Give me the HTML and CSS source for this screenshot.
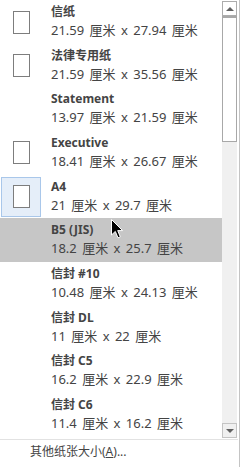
FILE: index.html
```html
<!DOCTYPE html>
<html lang="zh-CN">
<head>
    <meta charset="UTF-8">
    <title>纸张大小</title>
    <link rel="stylesheet" href="styles.css">
</head>
<body>
    <div class="menu">
        <div class="main">
            <!-- Paper size list -->
            <div class="list">
                <div class="item">
                    <div class="thumb"><span class="paper"></span></div>
                    <div class="text">
                        <div class="title">信纸</div>
                        <div class="size">21.59 厘米 x 27.94 厘米</div>
                    </div>
                </div>
                <div class="item">
                    <div class="thumb"><span class="paper"></span></div>
                    <div class="text">
                        <div class="title">法律专用纸</div>
                        <div class="size">21.59 厘米 x 35.56 厘米</div>
                    </div>
                </div>
                <div class="item">
                    <div class="thumb"></div>
                    <div class="text">
                        <div class="title">Statement</div>
                        <div class="size">13.97 厘米 x 21.59 厘米</div>
                    </div>
                </div>
                <div class="item">
                    <div class="thumb"><span class="paper"></span></div>
                    <div class="text">
                        <div class="title">Executive</div>
                        <div class="size">18.41 厘米 x 26.67 厘米</div>
                    </div>
                </div>
                <div class="item">
                    <div class="thumb selected"><span class="paper"></span></div>
                    <div class="text">
                        <div class="title">A4</div>
                        <div class="size">21 厘米 x 29.7 厘米</div>
                    </div>
                </div>
                <div class="item hover">
                    <div class="thumb"></div>
                    <div class="text">
                        <div class="title">B5 (JIS)</div>
                        <div class="size">18.2 厘米 x 25.7 厘米</div>
                    </div>
                </div>
                <div class="item">
                    <div class="thumb"></div>
                    <div class="text">
                        <div class="title">信封 #10</div>
                        <div class="size">10.48 厘米 x 24.13 厘米</div>
                    </div>
                </div>
                <div class="item">
                    <div class="thumb"></div>
                    <div class="text">
                        <div class="title">信封 DL</div>
                        <div class="size">11 厘米 x 22 厘米</div>
                    </div>
                </div>
                <div class="item">
                    <div class="thumb"></div>
                    <div class="text">
                        <div class="title">信封 C5</div>
                        <div class="size">16.2 厘米 x 22.9 厘米</div>
                    </div>
                </div>
                <div class="item">
                    <div class="thumb"></div>
                    <div class="text">
                        <div class="title">信封 C6</div>
                        <div class="size">11.4 厘米 x 16.2 厘米</div>
                    </div>
                </div>
            </div>

            <!-- Scrollbar -->
            <div class="scrollbar">
                <div class="arrow-btn up"><span class="tri-up"></span></div>
                <div class="scroll-thumb"></div>
                <div class="track"></div>
                <div class="arrow-btn down"><span class="tri-down"></span></div>
            </div>
        </div>

        <div class="footer">其他纸张大小(<u>A</u>)...</div>
    </div>

    <!-- Mouse pointer over the B5 row -->
    <svg class="cursor" width="13" height="20" viewBox="0 0 13 20">
        <path d="M0.5 0.5 L0.5 16 L4.3 12.4 L7 18.8 L9.3 17.8 L6.7 11.6 L11.6 11.6 Z" fill="#000" stroke="#fff" stroke-width="1"/>
    </svg>
</body>
</html>
```

FILE: styles.css
```css
body {
    margin: 0;
    background-color: #fff;
    font-family: "Noto Sans", "Noto Sans CJK SC", sans-serif;
    font-size: 12px;
    color: #444;
}

.menu {
    width: 239px;
    height: 467px;
    border-right: 1px solid #c4c4c4;
    display: flex;
    flex-direction: column;
}

.main {
    display: flex;
    height: 439px;
}

.list {
    width: 222px;
}

.item {
    height: 43.67px;
    display: flex;
    align-items: flex-start;
}

.item.hover {
    background-color: #c6c6c6;
}

/* Paper thumbnail cell */
.thumb {
    width: 40px;
    height: 40px;
    margin: 2px 0 0 1px;
    box-sizing: border-box;
    display: flex;
    align-items: center;
    justify-content: center;
}

.thumb.selected {
    background-color: #e5eef9;
    border: 1px solid #a9c7ea;
}

.paper {
    width: 17px;
    height: 23px;
    box-sizing: border-box;
    border: 1px solid #7d7d7d;
    background-color: #fff;
}

.text {
    padding: 3px 0 0 10px;
    white-space: nowrap;
}

.title {
    font-weight: 700;
    line-height: 18px;
}

.size {
    font-size: 13px;
    word-spacing: 2px;
    line-height: 19px;
}

/* Scrollbar */
.scrollbar {
    width: 15px;
    margin-top: 1px;
    height: 437px;
    display: flex;
    flex-direction: column;
    background-color: #f0f0f0;
}

.arrow-btn {
    height: 15px;
    box-sizing: border-box;
    border: 1px solid #acacac;
    display: flex;
    align-items: center;
    justify-content: center;
}

.arrow-btn.up {
    background-color: #fff;
}

.arrow-btn.down {
    border-color: #c4c4c4;
}

.tri-up {
    border-left: 4px solid transparent;
    border-right: 4px solid transparent;
    border-bottom: 4px solid #606060;
}

.tri-down {
    border-left: 4px solid transparent;
    border-right: 4px solid transparent;
    border-top: 4px solid #606060;
}

.scroll-thumb {
    height: 126px;
    box-sizing: border-box;
    border: 1px solid #a8a8a8;
    border-top-width: 2px;
    background-color: #fff;
}

.track {
    flex: 1;
}

.footer {
    border-top: 1px solid #e2e2e2;
    margin-right: 1px;
    padding: 3px 0 0 30px;
    line-height: 18px;
}

.cursor {
    position: absolute;
    left: 111px;
    top: 219px;
}
```
